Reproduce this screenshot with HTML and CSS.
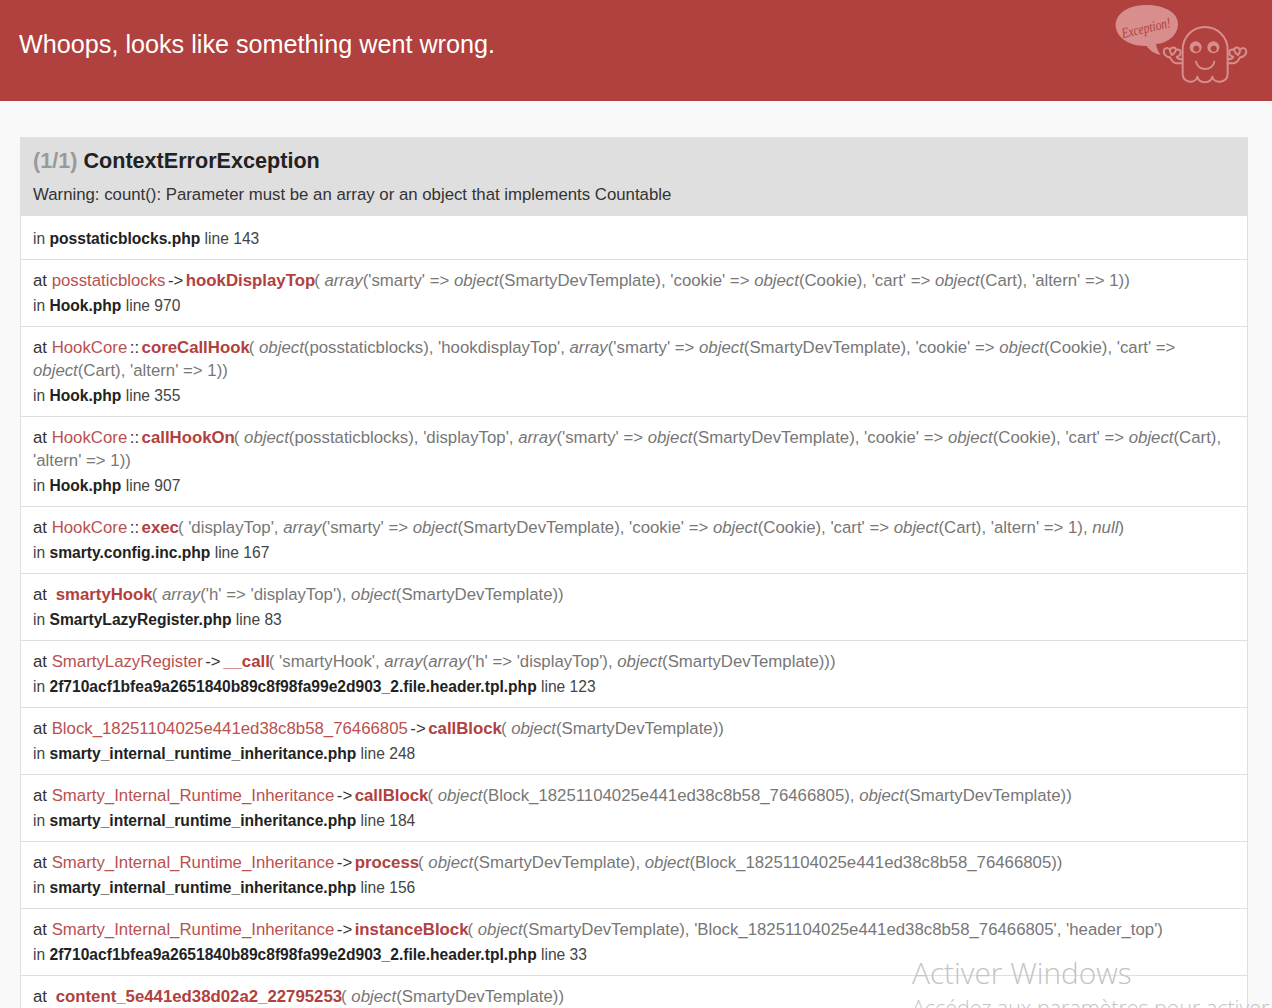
FILE: index.html
```html
<!DOCTYPE html>
<html lang="en">
<head>
<meta charset="utf-8">
<title>Whoops, looks like something went wrong.</title>
<link rel="stylesheet" href="styles.css">
</head>
<body>
<header class="hero">
  <h1 class="hero-title">Whoops, looks like something went wrong.</h1>
  <svg class="ghost" viewBox="0 0 546 300" aria-hidden="true">
    <path class="bubble" d="M168 15C222 15 264 37 264 72C264 106 232 130 198 132C200 145 205 156 212 164C195 163 180 152 170 138C115 140 77 110 77 76C77 40 115 15 168 15Z"/>
    <text class="bubble-text" transform="translate(98 115) rotate(-13)" textLength="150" lengthAdjust="spacingAndGlyphs">Exception!</text>
    <path class="line" d="M278 224V150C278 110 308 81 345 81C382 81 413 110 413 150V224C410 250 373 252 367 230C361 252 328 252 322 230C316 252 281 250 278 224Z"/>
    <circle class="eye" cx="317" cy="142" r="18"/><circle class="pupil" cx="319" cy="146" r="9"/>
    <circle class="eye" cx="370" cy="142" r="18"/><circle class="pupil" cx="371" cy="146" r="9"/>
    <path class="line" d="M318 185C323 214 368 214 373 185"/>
    <path class="line" d="M277 190H258C250 188 244 180 240 172C228 172 218 160 222 150C226 142 236 142 240 150C244 140 256 140 258 150C266 146 274 152 272 160C270 168 264 170 260 170C262 176 266 178 277 178M240 150C240 156 243 162 246 165M258 150C256 156 252 162 246 165"/>
    <path class="line" d="M413 190H432C440 188 446 180 450 172C462 172 472 160 468 150C464 142 454 142 450 150C446 140 434 140 432 150C424 146 416 152 418 160C420 168 426 170 430 170C428 176 424 178 413 178M450 150C450 156 447 162 444 165M432 150C434 156 438 162 444 165"/>
  </svg>
</header>
<main class="content">
  <section class="card">
    <div class="card-head">
      <h2 class="exception"><span class="counter">(1/1)</span> ContextErrorException</h2>
      <p class="message">Warning: count(): Parameter must be an array or an object that implements Countable</p>
    </div>
    <ol class="trace">
      <li class="frame first"><div>in <b>posstaticblocks.php</b> line 143</div></li>
      <li class="frame"><div class="call">at <a>posstaticblocks</a><span class="op">-&gt;</span><strong>hookDisplayTop</strong><span class="args">( <i>array</i>('smarty' =&gt; <i>object</i>(SmartyDevTemplate), 'cookie' =&gt; <i>object</i>(Cookie), 'cart' =&gt; <i>object</i>(Cart), 'altern' =&gt; 1))</span></div><div class="loc">in <b>Hook.php</b> line 970</div></li>
      <li class="frame"><div class="call">at <a>HookCore</a><span class="op">::</span><strong>coreCallHook</strong><span class="args">( <i>object</i>(posstaticblocks), 'hookdisplayTop', <i>array</i>('smarty' =&gt; <i>object</i>(SmartyDevTemplate), 'cookie' =&gt; <i>object</i>(Cookie), 'cart' =&gt; <i>object</i>(Cart), 'altern' =&gt; 1))</span></div><div class="loc">in <b>Hook.php</b> line 355</div></li>
      <li class="frame"><div class="call">at <a>HookCore</a><span class="op">::</span><strong>callHookOn</strong><span class="args">( <i>object</i>(posstaticblocks), 'displayTop', <i>array</i>('smarty' =&gt; <i>object</i>(SmartyDevTemplate), 'cookie' =&gt; <i>object</i>(Cookie), 'cart' =&gt; <i>object</i>(Cart), 'altern' =&gt; 1))</span></div><div class="loc">in <b>Hook.php</b> line 907</div></li>
      <li class="frame"><div class="call">at <a>HookCore</a><span class="op">::</span><strong>exec</strong><span class="args">( 'displayTop', <i>array</i>('smarty' =&gt; <i>object</i>(SmartyDevTemplate), 'cookie' =&gt; <i>object</i>(Cookie), 'cart' =&gt; <i>object</i>(Cart), 'altern' =&gt; 1), <i>null</i>)</span></div><div class="loc">in <b>smarty.config.inc.php</b> line 167</div></li>
      <li class="frame"><div class="call">at <span class="op-gap"></span><strong>smartyHook</strong><span class="args">( <i>array</i>('h' =&gt; 'displayTop'), <i>object</i>(SmartyDevTemplate))</span></div><div class="loc">in <b>SmartyLazyRegister.php</b> line 83</div></li>
      <li class="frame"><div class="call">at <a>SmartyLazyRegister</a><span class="op">-&gt;</span><strong>__call</strong><span class="args">( 'smartyHook', <i>array</i>(<i>array</i>('h' =&gt; 'displayTop'), <i>object</i>(SmartyDevTemplate)))</span></div><div class="loc">in <b>2f710acf1bfea9a2651840b89c8f98fa99e2d903_2.file.header.tpl.php</b> line 123</div></li>
      <li class="frame"><div class="call">at <a>Block_18251104025e441ed38c8b58_76466805</a><span class="op">-&gt;</span><strong>callBlock</strong><span class="args">( <i>object</i>(SmartyDevTemplate))</span></div><div class="loc">in <b>smarty_internal_runtime_inheritance.php</b> line 248</div></li>
      <li class="frame"><div class="call">at <a>Smarty_Internal_Runtime_Inheritance</a><span class="op">-&gt;</span><strong>callBlock</strong><span class="args">( <i>object</i>(Block_18251104025e441ed38c8b58_76466805), <i>object</i>(SmartyDevTemplate))</span></div><div class="loc">in <b>smarty_internal_runtime_inheritance.php</b> line 184</div></li>
      <li class="frame"><div class="call">at <a>Smarty_Internal_Runtime_Inheritance</a><span class="op">-&gt;</span><strong>process</strong><span class="args">( <i>object</i>(SmartyDevTemplate), <i>object</i>(Block_18251104025e441ed38c8b58_76466805))</span></div><div class="loc">in <b>smarty_internal_runtime_inheritance.php</b> line 156</div></li>
      <li class="frame"><div class="call">at <a>Smarty_Internal_Runtime_Inheritance</a><span class="op">-&gt;</span><strong>instanceBlock</strong><span class="args">( <i>object</i>(SmartyDevTemplate), 'Block_18251104025e441ed38c8b58_76466805', 'header_top')</span></div><div class="loc">in <b>2f710acf1bfea9a2651840b89c8f98fa99e2d903_2.file.header.tpl.php</b> line 33</div></li>
      <li class="frame"><div class="call">at <span class="op-gap"></span><strong>content_5e441ed38d02a2_22795253</strong><span class="args">( <i>object</i>(SmartyDevTemplate))</span></div></li>
    </ol>
  </section>
</main>
<aside class="activation">
  <div class="activation-title">Activer Windows</div>
  <div class="activation-text">Accédez aux paramètres pour activer Windows.</div>
</aside>
</body>
</html>
```
FILE: styles.css
```css
html, body { margin: 0; padding: 0; height: 1008px; overflow: hidden; }
body { background: #f9f9f9; color: #222; font-family: "Liberation Sans", Arial, sans-serif; font-size: 16px; position: relative; }
.hero { height: 101px; background: #b0413e; display: flex; justify-content: space-between; align-items: flex-start; }
.hero-title { margin: 0; padding: 30px 0 0 19px; font-size: 25.2px; font-weight: 400; line-height: 29px; color: #fff; }
.ghost { width: 182px; height: 100px; flex: none; }
.bubble { fill: #d88e8c; }
.bubble-text { fill: #b0413e; font-family: "Liberation Serif", serif; font-style: italic; font-size: 44px; }
.line { fill: none; stroke: #d88e8c; stroke-width: 6; stroke-linejoin: round; stroke-linecap: round; }
.eye { fill: #d88e8c; }
.pupil { fill: #b0413e; }
.content { padding: 36px 24px 0 20px; }
.card { background: #fff; border: 1px solid #dfdfdf; border-top: 0; }
.card-head { background: #dfdfdf; height: 79px; margin: 0 -1px; padding: 0 13px; box-sizing: border-box; }
.exception { margin: 0; padding-top: 11px; font-size: 21.6px; line-height: 26px; font-weight: 700; color: #222; }
.counter { color: #999; }
.message { margin: 11px 0 0; font-size: 16.8px; line-height: 20px; color: #333; }
.trace { list-style: none; margin: 0; padding: 0; }
.frame { padding: 9px 12px; border-bottom: 1px solid #dfdfdf; line-height: 23px; color: #444; font-size: 15.6px; }
.frame.first { padding: 11px 12px 9px; }
.frame b { color: #222; }
.loc { margin-top: 2px; }
.call { color: #333; font-size: 16.8px; }
.call a { color: #b9514e; }
.call strong { color: #b0413e; }
.args { color: #777; margin-left: -1px; }
.op { color: #333; margin: 0 2.5px; }
.op-gap { display: inline-block; width: 4px; }
.activation { position: absolute; left: 912px; right: 0; top: 955px; color: #c4c4c4; font-family: "Open Sans", sans-serif; font-weight: 300; white-space: nowrap; overflow: hidden; }
.activation-title { font-size: 29.8px; line-height: 36px; }
.activation-text { font-size: 21.4px; line-height: 26px; margin-top: 4px; }
```
